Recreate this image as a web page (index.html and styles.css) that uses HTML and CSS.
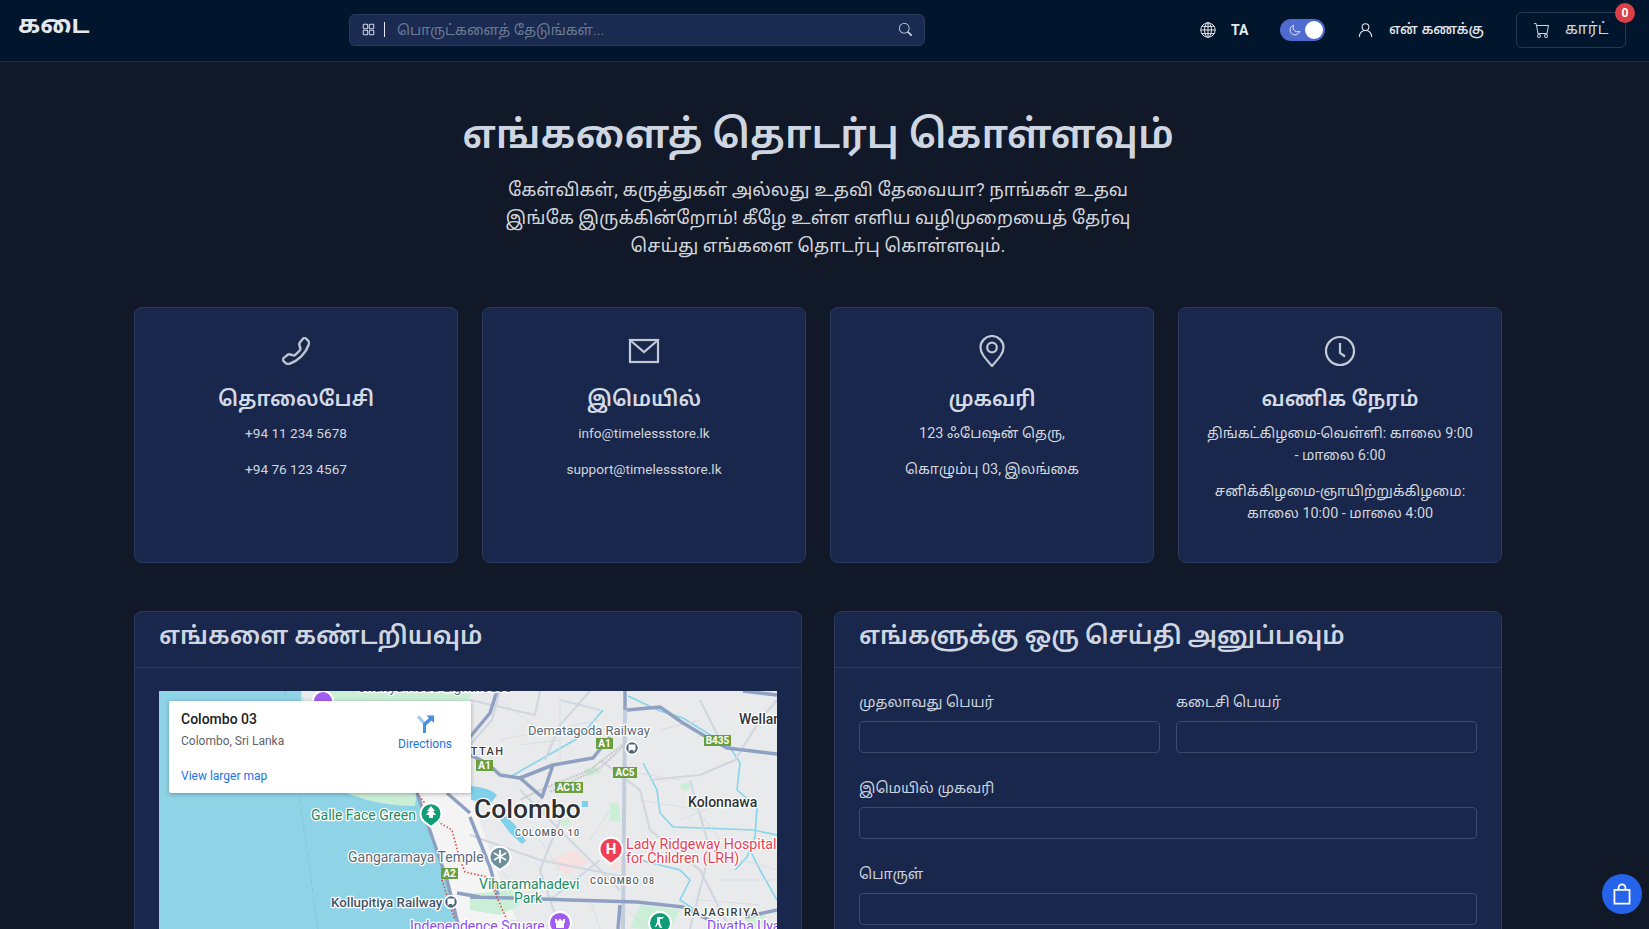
FILE: index.html
```html
<!DOCTYPE html>
<html lang="ta">
<head>
<meta charset="utf-8">
<title>எங்களைத் தொடர்பு கொள்ளவும்</title>
<link rel="stylesheet" href="styles.css">
</head>
<body>
<header class="navbar">
  <a class="brand">கடை</a>
  <form class="search">
    <svg class="ic-grid" viewBox="0 0 16 16" fill="none" stroke="currentColor" stroke-width="1.3"><rect x="1.5" y="1.5" width="5.5" height="5.5" rx="1"/><rect x="9" y="1.5" width="5.5" height="5.5" rx="1"/><rect x="1.5" y="9" width="5.5" height="5.5" rx="1"/><rect x="9" y="9" width="5.5" height="5.5" rx="1"/></svg>
    <span class="search-sep"></span>
    <span class="search-ph">பொருட்களைத் தேடுங்கள்...</span>
    <svg class="ic-search" viewBox="0 0 16 16" fill="currentColor"><path d="M11.742 10.344a6.5 6.5 0 1 0-1.397 1.398h-.001q.044.06.098.115l3.85 3.85a1 1 0 0 0 1.415-1.414l-3.85-3.85a1 1 0 0 0-.115-.1zM12 6.5a5.5 5.5 0 1 1-11 0 5.5 5.5 0 0 1 11 0"/></svg>
  </form>
  <div class="nav-right">
    <svg class="ic-globe" viewBox="0 0 16 16" fill="none" stroke="currentColor" stroke-width="1"><circle cx="8" cy="8" r="7.2"/><ellipse cx="8" cy="8" rx="3.4" ry="7.2"/><path d="M8 .8v14.4M.8 8h14.4M1.8 4.4h12.4M1.8 11.6h12.4"/></svg>
    <span class="lang">TA</span>
    <span class="toggle">
      <svg class="ic-moon" viewBox="0 0 16 16" fill="none" stroke="currentColor" stroke-width="1.1"><path d="M6.2 1.6a6.6 6.6 0 1 0 8.2 8.2A6 6 0 0 1 6.2 1.6z"/></svg>
      <span class="knob"></span>
    </span>
    <svg class="ic-user" viewBox="0 0 16 16" fill="none" stroke="currentColor" stroke-width="1.15" stroke-linecap="round"><circle cx="8" cy="4.9" r="3.6"/><path d="M1.4 15c.5-3.6 3-6.4 6.6-6.4s6.100 2.800 6.600 6.400"/></svg>
    <span class="account">என் கணக்கு</span>
    <a class="cart">
      <svg class="ic-cart" viewBox="0 0 16 16" fill="currentColor"><path d="M0 1.500A.5.5 0 0 1 .5 1H2a.5.5 0 0 1 .485.379L2.890 3H14.500a.5.5 0 0 1 .491.592l-1.500 8A.5.5 0 0 1 13 12H4a.5.5 0 0 1-.491-.408L2.010 3.607 1.610 2H.5a.5.5 0 0 1-.5-.5M3.102 4l1.313 7h8.170l1.313-7zM5 12a2 2 0 1 0 0 4 2 2 0 0 0 0-4m7 0a2 2 0 1 0 0 4 2 2 0 0 0 0-4m-7 1a1 1 0 1 1 0 2 1 1 0 0 1 0-2m7 0a1 1 0 1 1 0 2 1 1 0 0 1 0-2"/></svg>
      <span>கார்ட்</span>
      <span class="badge">0</span>
    </a>
  </div>
</header>

<main class="page">
  <section class="intro">
    <h1>எங்களைத் தொடர்பு கொள்ளவும்</h1>
    <p>கேள்விகள், கருத்துகள் அல்லது உதவி தேவையா? நாங்கள் உதவ இங்கே இருக்கின்றோம்! கீழே உள்ள எளிய வழிமுறையைத் தேர்வு செய்து எங்களை தொடர்பு கொள்ளவும்.</p>
  </section>

  <section class="info-grid">
    <article class="info-card">
      <svg class="info-ic ic-phone" viewBox="0 0 16 16" fill="currentColor"><path d="M3.654 1.328a.678.678 0 0 0-1.015-.063L1.605 2.300c-.483.484-.661 1.169-.45 1.770a17.600 17.600 0 0 0 4.168 6.608 17.600 17.600 0 0 0 6.608 4.168c.601.211 1.286.033 1.770-.45l1.034-1.034a.678.678 0 0 0-.063-1.015l-2.307-1.794a.68.68 0 0 0-.58-.122l-2.190.547a1.750 1.750 0 0 1-1.657-.459L5.482 8.062a1.750 1.750 0 0 1-.46-1.657l.548-2.190a.68.68 0 0 0-.122-.58zM1.884.511a1.745 1.745 0 0 1 2.612.163L6.290 2.980c.329.423.445.974.315 1.494l-.547 2.190a.68.68 0 0 0 .178.643l2.457 2.457a.68.68 0 0 0 .644.178l2.189-.547a1.750 1.750 0 0 1 1.494.315l2.306 1.794c.829.645.905 1.870.163 2.611l-1.034 1.034c-.74.74-1.846 1.065-2.877.702a18.600 18.600 0 0 1-7.010-4.420 18.600 18.600 0 0 1-4.420-7.009c-.362-1.030-.037-2.137.703-2.877z"/></svg>
      <h3>தொலைபேசி</h3>
      <p class="latin">+94 11 234 5678</p>
      <p class="latin">+94 76 123 4567</p>
    </article>
    <article class="info-card">
      <svg class="info-ic" viewBox="0 0 32 32" fill="none" stroke="currentColor" stroke-width="2.2"><rect x="2" y="5" width="28" height="22"/><path d="M2.500 5.500 16 17 29.500 5.500"/></svg>
      <h3>இமெயில்</h3>
      <p class="latin">info@timelessstore.lk</p>
      <p class="latin">support@timelessstore.lk</p>
    </article>
    <article class="info-card">
      <svg class="info-ic" viewBox="0 0 32 32" fill="none" stroke="currentColor" stroke-width="2.2"><path d="M16 31C8 22 4.500 17.500 4.500 12.500a11.500 11.500 0 0 1 23 0C27.500 17.500 24 22 16 31z"/><circle cx="16" cy="12.500" r="4.800"/></svg>
      <h3>முகவரி</h3>
      <p>123 ஃபேஷன் தெரு,</p>
      <p>கொழும்பு 03, இலங்கை</p>
    </article>
    <article class="info-card">
      <svg class="info-ic" viewBox="0 0 32 32" fill="none" stroke="currentColor" stroke-width="2.2"><circle cx="16" cy="16" r="14"/><path d="M16 8v10l5 3.500"/></svg>
      <h3>வணிக நேரம்</h3>
      <p>திங்கட்கிழமை-வெள்ளி: காலை 9:00 - மாலை 6:00</p>
      <p>சனிக்கிழமை-ஞாயிற்றுக்கிழமை: காலை 10:00 - மாலை 4:00</p>
    </article>
  </section>

  <section class="lower">
    <article class="panel">
      <h2 class="panel-head">எங்களை கண்டறியவும்</h2>
      <div class="panel-body">
        <div class="map">
          <svg class="map-svg" viewBox="159 691 618 450" width="618" height="450">
            <rect class="land" x="159" y="691" width="618" height="450"/>
            <path class="land-w" d="M417 793H470L500 880 520 929H457L443 870 430 827Z"/>
            <path class="water" d="M159 691H301C306 720 330 770 417 793L430 827L443 870L457 920L468 1000L480 1141H159Z"/>
            <path class="park" d="M301 691C306 720 330 770 417 793L415 806C370 806 330 790 312 770C305 750 300 720 301 691Z"/>
            <path class="park" d="M320 691H470V720L400 730L340 720Z"/>
            <path class="park" d="M470 894 512 890 520 905 500 915 470 910Z"/>
            <path class="park" d="M583 770l12-4 6 6-12 5zM610 803h8l3 18h-11zM680 785l10-3 4 5-12 4zM540 808l10-2 2 8-10 2zM560 821l8-3 3 6-8 3zM745 915l18-3 6 12-20 5zM640 905l40 5-10 20-40-2z"/>
            <path class="hosp" d="M550 860l24-10 14 12-22 12zM610 862h16l2 8h-16z"/>
            <path class="lake" d="M471 786c10 1 20 3 26 9l-6 8-20-3zM498 817l6-3 12 12 10 15-4 3-12-11z"/>
            <path class="lake" d="M582 801h6v6h-6z"/>
            <path class="rv" d="M603 710 580 737 510 777"/>
            <path class="rv" d="M628 696 660 711 683 718 730 747 740 763 737 790 757 807 755 837 747 857 735 870"/>
            <path class="rv" d="M643 763 657 790 660 813 673 827 703 828 753 830 777 835"/>
            <path class="rv" d="M640 860 680 870 690 880 680 900 695 910M745 840 760 870 777 900"/>
            <path class="rd-m" d="M500 691 492 720 470 745M470 700 535 715 540 691M590 691 560 725 545 760M600 760 640 790 650 830 700 870 730 929M520 790 580 850 620 890M470 835 540 860 640 880M600 860 550 900M560 700 600 710M650 780 700 775 735 760 760 720 777 700M690 780 710 850 690 929M560 820 540 870 560 929M700 700 720 740"/>
            <path class="rd-t" d="M500 740 600 720M530 810 560 780M620 770 680 780M640 800 700 810M590 840 610 810M540 840 560 870M480 850 520 890M680 820 730 800M740 860 777 870M720 880 777 880M510 920 570 929M590 900 600 929M620 905 650 929M690 800 720 840M560 700 560 760M660 730 700 720M700 900 760 905M500 700 540 730M520 745 560 740"/>
            <path class="rd-l" d="M625 710 623 929"/>
            <path class="rd-rail" d="M622 745 590 770 540 790 520 800M625 745 600 768 550 792"/>
            <path class="rd-h" d="M625 691 625 710M627 710 660 707 683 723 703 735 727 748 777 754M743 691 777 695"/>
            <path class="rd-h" d="M497 691 490 713 470 737M610 737 593 758 553 765 520 778 500 775 487 763 470 755M553 765 542 797 520 778"/>
            <path class="rd-h" d="M470 897 510 898 570 900 637 902 683 907 703 917 730 929M417 793 447 880 457 920 460 929M447 793 470 813M457 893 480 897M470 817 490 867 498 895M745 917 777 910M620 905 618 929"/>
            <path class="rd-dot" d="M417 793 440 823 452 830 460 860 465 872 487 877 495 893 507 920M442 880 455 920"/>
            <path class="sea-l" d="M285 691 300 800 318 929"/>
            <g class="lbl">
              <text class="t-slate t-sm" x="528" y="735">Dematagoda Railway</text>
              <text class="t-dark" x="739" y="724">Wellan</text>
              <text class="t-caps2" x="463" y="755">ETTAH</text>
              <text class="t-city" x="474" y="818">Colombo</text>
              <text class="t-caps" x="515" y="836">COLOMBO 10</text>
              <text class="t-caps" x="590" y="884">COLOMBO 08</text>
              <text class="t-dark" x="688" y="807">Kolonnawa</text>
              <text class="t-red" x="626" y="849">Lady Ridgeway Hospital</text>
              <text class="t-red" x="626" y="863">for Children (LRH)</text>
              <text class="t-green" x="479" y="889">Viharamahadevi</text>
              <text class="t-green" x="514" y="903">Park</text>
              <text class="t-caps2" x="684" y="916">RAJAGIRIYA</text>
              <text class="t-purple" x="410" y="931">Independence Square</text>
              <text class="t-purple" x="707" y="931">Divatha Uyana</text>
              <text class="t-slate" x="348" y="862">Gangaramaya Temple</text>
              <text class="t-green" x="311" y="820">Galle Face Green</text>
              <text class="t-rail" x="331" y="907">Kollupitiya Railway</text>
              <text class="t-slate" x="357" y="692">Chaitya Road Lighthouse</text>
            </g>
            <g class="shield">
              <rect x="596" y="738" width="17" height="11"/><text x="604.500" y="747">A1</text>
              <rect x="476" y="760" width="17" height="11"/><text x="484.500" y="769">A1</text>
              <rect x="613" y="767" width="24" height="11"/><text x="625" y="776">AC5</text>
              <rect x="555" y="782" width="28" height="11"/><text x="569" y="791">AC13</text>
              <rect x="704" y="735" width="27" height="11"/><text x="717.500" y="744">B435</text>
              <rect x="441" y="868" width="17" height="11"/><text x="449.500" y="877">A2</text>
            </g>
            <g class="pin pin-red"><path d="M611 864l-8-6.500a11.500 11.500 0 1 1 16 0z"/></g>
            <text class="pin-h" x="611" y="853.500">H</text>
            <g class="pin pin-green"><path d="M431 827l-7-5.500a10.500 10.500 0 1 1 14 0z"/></g>
            <path class="pin-w" d="M431 806l4 5h-2l3 4h-3v3h-4v-3h-3l3-4h-2z"/>
            <g class="pin pin-gray"><path d="M500 870l-7-5a10.500 10.500 0 1 1 14 0z"/></g>
            <path class="pin-sn" d="M500 850v13M494 853l12 7M506 853l-12 7"/>
            <g class="pin pin-purple"><circle cx="560" cy="923" r="11"/></g>
            <path class="pin-w" d="M555 919h2v1.500h2v-1.500h2v1.500h2v-1.500h2v4h-1v5h-8v-5h-1z"/>
            <g class="pin pin-green"><circle cx="660" cy="923" r="11"/></g>
            <path class="pin-w" d="M657 917h7l-2 2h-2v4l2 5h-2l-2-4-2 3h-1l2-5z"/>
            <g class="pin pin-purple"><circle cx="323" cy="701" r="10"/></g>
            <g class="pin pin-rail"><circle cx="451" cy="902" r="6.500"/><circle cx="632" cy="748" r="6.500"/></g>
            <path class="pin-w" d="M447.500 898.500h7v5.500h-1.500l1 1.500h-1.200l-1-1.500h-2.600l-1 1.500h-1.200l1-1.500h-.5zM628.500 744.500h7v5.500h-1.500l1 1.500h-1.200l-1-1.500h-2.600l-1 1.500h-1.200l1-1.500h-.5z"/>
          </svg>
          <div class="map-card">
            <div class="map-card-main">
              <div class="map-place">Colombo 03</div>
              <div class="map-addr">Colombo, Sri Lanka</div>
              <a class="map-link">View larger map</a>
            </div>
            <a class="map-dir">
              <svg class="ic-dir" viewBox="0 0 18 18"><path class="dir-a" d="M1 2.500 3.500 .5 10 8v10H7V9.500z"/><path class="dir-b" d="M7 18V8.500L13 3 10.500 .5H18V8l-2.500-2.500L10 10.500V18z"/></svg>
              <span>Directions</span>
            </a>
          </div>
        </div>
      </div>
    </article>

    <article class="panel">
      <h2 class="panel-head">எங்களுக்கு ஒரு செய்தி அனுப்பவும்</h2>
      <form class="panel-body contact">
        <div class="row-2">
          <label class="field"><span>முதலாவது பெயர்</span><input type="text"></label>
          <label class="field"><span>கடைசி பெயர்</span><input type="text"></label>
        </div>
        <label class="field"><span>இமெயில் முகவரி</span><input type="email"></label>
        <label class="field"><span>பொருள்</span><input type="text"></label>
      </form>
    </article>
  </section>
</main>

<a class="fab">
  <svg viewBox="0 0 16 16" fill="none" stroke="currentColor" stroke-width="1.300"><path d="M2.500 5h11v10h-11zM5.500 5V3.500a2.500 2.500 0 0 1 5 0V5"/></svg>
</a>
</body>
</html>
```

FILE: styles.css
```css
* { box-sizing: border-box; }
html, body { margin: 0; height: 100%; overflow: hidden; }
body {
  background: #111827;
  color: #d1d5db;
  font-family: Roboto, "Noto Sans Tamil", "Noto Sans", sans-serif;
  font-size: 14px;
}
.navbar {
  height: 62px;
  background: #01162d;
  border-bottom: 1px solid #1f2a44;
  display: flex;
  align-items: center;
  position: relative;
  padding: 0 0 2px 18px;
}
.brand { width: 331px; font-size: 24.3px; font-weight: 700; color: #e5e7eb; margin-top: -7px; }
.search {
  width: 576px;
  height: 32px;
  background: #1a2a50;
  border: 1px solid #2c3a5c;
  border-radius: 6px;
  display: flex;
  align-items: center;
  padding: 0 12px 0 12px;
  color: #cbd5e1;
}
.ic-grid { width: 13px; height: 13px; }
.search-sep { width: 1px; height: 15px; background: #e5e7eb; margin: 0 12px 0 9px; }
.search-ph { flex: 1; font-size: 14.4px; color: #6b7a94; margin-top: 3px; }
.ic-search { width: 13px; height: 13px; color: #cbd5e1; }
.nav-right { margin-left: 275px; display: flex; align-items: center; color: #e5e7eb; }
.ic-globe { width: 16px; height: 16px; }
.lang { font-weight: 700; font-size: 14px; margin: 1px 0 0 15px; width: 49px; }
.toggle {
  width: 45px; height: 22px; border-radius: 11px; background: #4f6bd0;
  display: flex; align-items: center; padding: 0 2px 0 9px; justify-content: space-between; color: #fff;
}
.ic-moon { width: 12px; height: 12px; }
.knob { width: 18px; height: 18px; border-radius: 50%; background: #fff; }
.ic-user { width: 15px; height: 16px; margin-left: 33px; }
.account { margin: 1px 0 0 16px; font-size: 14px; width: 127px; font-weight: 500; }
.cart {
  position: relative; width: 110px; height: 36px; border: 1px solid #2a3750; border-radius: 6px;
  display: flex; align-items: center; padding-left: 17px; gap: 15px; font-size: 15.5px; color: #cfd5df;
}
.ic-cart { width: 16px; height: 16px; }
.badge {
  position: absolute; top: -10px; right: -10px; width: 20px; height: 20px; border-radius: 50%;
  background: #dc3f45; color: #fff; font-size: 12px; font-weight: 700; display: flex; align-items: center; justify-content: center;
}
.page { margin: 0 147px 0 134px; }
.intro { text-align: center; padding-top: 47px; }
.intro h1 { margin: 0; font-size: 39.6px; line-height: 52px; font-weight: 600; color: #cfd6e1; }
.intro p { margin: 15px auto 0; width: 640px; font-size: 18.4px; line-height: 28px; color: #d1d5db; }
.info-grid { display: grid; grid-template-columns: repeat(4, 1fr); gap: 24px; margin-top: 47px; }
.info-card {
  height: 256px; background: #19274c; border: 1px solid #2a3a60; border-radius: 8px;
  padding: 27px 25px 0; text-align: center;
}
.info-ic { display: block; width: 32px; height: 32px; margin: 0 auto; color: #c3cad6; }
.ic-phone { width: 28px; height: 28px; transform: scaleX(-1); margin: 2px auto 18px; stroke: currentColor; stroke-width: .35; }
.info-card h3 { margin: 16px 0 0; font-size: 21px; line-height: 32px; font-weight: 600; color: #d3dae5; }
.info-card p { margin: 0 0 14px; font-size: 14.4px; line-height: 22px; color: #d1d5db; }
.info-card h3 + p { margin-top: 8px; }
.info-card .latin { font-size: 13.6px; line-height: 20px; margin-bottom: 16px; }
.lower { display: grid; grid-template-columns: 668px 668px; gap: 32px; margin-top: 48px; }
.panel { background: #19274c; border: 1px solid #2a3a60; border-radius: 8px; height: 600px; }
.panel-head {
  margin: 0; height: 56px; padding: 0 24px; font-size: 24.7px; line-height: 48px; font-weight: 600; color: #cfd6e2;
  border-bottom: 1px solid #27386a;
}
.panel-body { padding: 23px 24px; }
.map { position: relative; width: 618px; height: 450px; overflow: hidden; background: #e8e9eb; }
.map-svg { display: block; font-family: Roboto, sans-serif; }
.land { fill: #e9eaec; }
.land-w { fill: #f4f4f5; }
.water { fill: #8fd3e7; }
.park { fill: #cbeed6; }
.hosp { fill: #f6e0e0; }
.lake { fill: #7fd0ea; }
.sea-l { fill: none; stroke: #7cc8df; stroke-width: 1; stroke-dasharray: 6 3; }
.rv { fill: none; stroke: #86d5ec; stroke-width: 1.600; }
.rd-h { fill: none; stroke: #8ea1c2; stroke-width: 3.500; stroke-linejoin: round; }
.rd-l { fill: none; stroke: #c3cddb; stroke-width: 4; }
.rd-m { fill: none; stroke: #d0d7e0; stroke-width: 2.200; }
.rd-t { fill: none; stroke: #d9dce1; stroke-width: 1; }
.rd-rail { fill: none; stroke: #c6c8cc; stroke-width: 2; stroke-dasharray: 2 1; }
.rd-dot { fill: none; stroke: #e8473f; stroke-width: 1.600; stroke-dasharray: 1.500 2; }
.lbl text { paint-order: stroke; stroke: #fff; stroke-width: 2.500; stroke-linejoin: round; font-size: 14px; }
.lbl .t-slate { fill: #5a6b7d; }
.lbl .t-sm { font-size: 13px; }
.lbl .t-rail { fill: #42566a; font-weight: 500; font-size: 13.3px; }
.lbl .t-dark { fill: #303338; font-weight: 500; }
.lbl .t-caps { fill: #55595f; font-size: 9px; font-weight: 500; letter-spacing: 1px; }
.lbl .t-caps2 { fill: #3a3d42; font-size: 11px; font-weight: 500; letter-spacing: 1.400px; }
.lbl .t-city { fill: #2e3033; font-size: 26.4px; font-weight: 500; }
.lbl .t-red { fill: #e83f55; font-size: 14.200px; }
.lbl .t-green { fill: #1a8a63; font-size: 14px; }
.lbl .t-purple { fill: #8a50ef; font-size: 14px; }
.shield rect { fill: #6b9e3f; }
.shield text { fill: #fff; font-size: 10px; font-weight: 700; text-anchor: middle; }
.pin path, .pin circle { stroke: #fff; stroke-width: 2; }
.pin-red path { fill: #ef4056; }
.pin-green path, .pin-green circle { fill: #0f9d77; }
.pin-gray path { fill: #6f8f9b; }
.pin-purple circle { fill: #a35cf2; }
.pin-rail circle { fill: #4d647b; stroke-width: 1.500; }
.pin-h { fill: #fff; font-size: 15px; font-weight: 700; text-anchor: middle; }
.pin-w { fill: #fff; }
.pin-sn { stroke: #fff; stroke-width: 1.800; fill: none; }
.map-card {
  position: absolute; left: 10px; top: 10px; width: 302px; height: 92px; background: #fff; border-radius: 2px;
  box-shadow: 0 1px 4px rgba(0,0,0,.3); font-family: Roboto, sans-serif; display: flex; justify-content: space-between; padding: 9px 19px 0 12px;
}
.map-place { font-size: 14px; line-height: 18px; font-weight: 500; color: #202124; }
.map-addr { font-size: 12px; line-height: 16px; margin-top: 5px; color: #5f6368; }
.map-link { display: block; font-size: 12px; line-height: 16px; margin-top: 19px; color: #1a73e8; }
.map-dir { display: flex; flex-direction: column; align-items: center; font-size: 12px; line-height: 16px; color: #1a73e8; padding-top: 5px; }
.ic-dir { width: 18px; height: 18px; margin-bottom: 3px; }
.dir-a { fill: #a6c8f0; }
.dir-b { fill: #4a90e2; }
.field { display: block; margin-bottom: 24px; }
.field span { display: block; font-size: 14.6px; line-height: 22px; margin-bottom: 8px; color: #cbd2dd; }
.field input { display: block; width: 100%; height: 32px; background: #19274c; border: 1px solid #3a4a6b; border-radius: 4px; }
.contact { display: block; }
.row-2 { display: grid; grid-template-columns: 1fr 1fr; gap: 16px; }
.fab {
  position: fixed; right: 7px; bottom: 15px; width: 40px; height: 40px; border-radius: 50%;
  background: #2563eb; color: #fff; display: flex; align-items: center; justify-content: center;
}
.fab svg { width: 22px; height: 22px; }
```
